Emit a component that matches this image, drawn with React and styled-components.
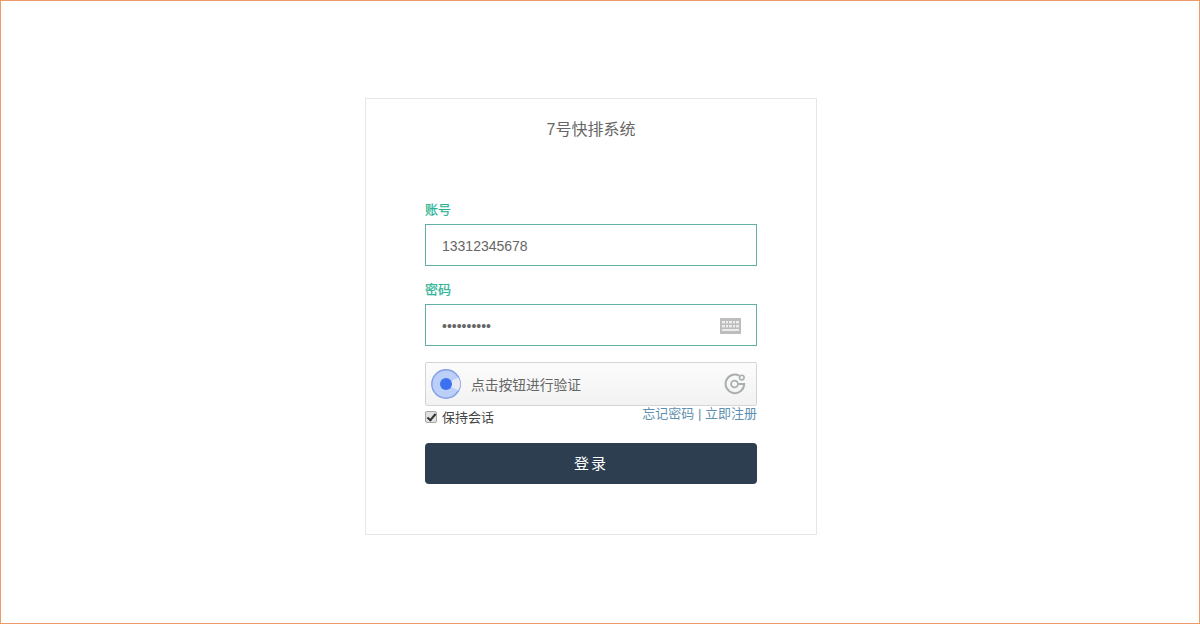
import React from "react";
import styled, { createGlobalStyle } from "styled-components";

const GlobalStyle = createGlobalStyle`
  html, body {
    margin: 0;
    padding: 0;
    background: #fff;
  }
  body, input, button {
    font-family: "Liberation Sans", "Noto Sans CJK SC", sans-serif;
  }
`;

const Frame = styled.div`
  box-sizing: border-box;
  width: 1200px;
  height: 624px;
  border: 1px solid #ee9a6b;
  padding-top: 97px;
  padding-left: 364px;
`;

const Card = styled.div`
  box-sizing: border-box;
  width: 452px;
  height: 437px;
  border: 1px solid #e7e7e7;
  padding: 21px 59px 0;
`;

const Title = styled.h1`
  margin: 0 0 60px;
  height: 20px;
  line-height: 20px;
  font-size: 16px;
  font-weight: 400;
  color: #666;
  text-align: center;
`;

const Label = styled.label`
  display: block;
  height: 18px;
  line-height: 20px;
  margin-bottom: 6px;
  font-size: 13px;
  color: #2bb394;
  -webkit-text-stroke: 0.25px #2bb394;
`;

const Field = styled.div`
  position: relative;
  margin-bottom: ${({ $gap }) => $gap}px;
`;

const Input = styled.input`
  display: block;
  box-sizing: border-box;
  width: 100%;
  height: 42px;
  padding: 2px 16px 0;
  border: 1px solid #62b0a8;
  border-radius: 0;
  outline: none;
  background: #fff;
  color: #666;
  font-size: 14px;
`;

const KeyboardIcon = styled.svg`
  position: absolute;
  right: 16px;
  top: 14px;
  width: 21px;
  height: 16px;
`;

const Captcha = styled.div`
  box-sizing: border-box;
  display: flex;
  align-items: center;
  width: 100%;
  height: 44px;
  padding: 0 10px 0 5px;
  border: 1px solid #d4d4d4;
  border-radius: 2px;
  background: linear-gradient(180deg, #fcfcfc 0%, #f2f2f2 100%);
`;

const CaptchaText = styled.span`
  flex: 1;
  margin-left: 10px;
  font-size: 13.75px;
  color: #666;
`;

const OptionsRow = styled.div`
  display: flex;
  justify-content: space-between;
  align-items: flex-start;
  height: 37px;
`;

const Remember = styled.label`
  display: flex;
  align-items: center;
  margin-top: 3px;
  font-size: 13px;
  line-height: 18px;
  color: #444;
`;

const Checkbox = styled.input`
  appearance: none;
  position: relative;
  box-sizing: border-box;
  width: 12px;
  height: 12px;
  margin: 0 5px 2px 0;
  border: 1px solid #a6a6a6;
  border-radius: 2px;
  background: #e2e2e2;

  &:checked::after {
    content: "";
    position: absolute;
    left: 3px;
    top: 0;
    width: 3px;
    height: 7px;
    border: solid #333;
    border-width: 0 2px 2px 0;
    transform: rotate(40deg);
  }
`;

const Links = styled.div`
  margin-top: -1px;
  font-size: 13px;
  line-height: 18px;
  color: #5f8fb0;
`;

const LinkItem = styled.a`
  color: #5f8fb0;
  text-decoration: none;
`;

const SubmitButton = styled.button`
  display: block;
  width: 100%;
  height: 41px;
  padding: 0 0 2px;
  border: 0;
  border-radius: 4px;
  background: #2c3e50;
  color: #fff;
  font-size: 15px;
  letter-spacing: 2px;
`;

function Keyboard() {
  return (
    <KeyboardIcon viewBox="0 0 21 16">
      <rect width="21" height="16" fill="#bdbdbd" />
      <g fill="#ececec">
        <rect x="2" y="3" width="3" height="2.4" />
        <rect x="6" y="3" width="2" height="2.4" />
        <rect x="9" y="3" width="3" height="2.4" />
        <rect x="13" y="3" width="2" height="2.4" />
        <rect x="16" y="3" width="3" height="2.4" />
        <rect x="2" y="7" width="3" height="2.4" />
        <rect x="6" y="7" width="2" height="2.4" />
        <rect x="9" y="7" width="3" height="2.4" />
        <rect x="13" y="7" width="2" height="2.4" />
        <rect x="16" y="7" width="3" height="2.4" />
        <rect x="2" y="11" width="17" height="2" />
      </g>
    </KeyboardIcon>
  );
}

function CaptchaMark() {
  return (
    <svg width="30" height="30" viewBox="0 0 30 30">
      <circle cx="15" cy="15" r="14.2" fill="#bccff8" stroke="#7f9fe6" strokeWidth="1.4" />
      <path d="M15 15 L27.4 8.5 A13.6 13.6 0 0 1 27.4 21.5 Z" fill="#e6e9f2" />
      <circle cx="15" cy="15" r="6" fill="#3b71f0" />
    </svg>
  );
}

function RefreshMark() {
  return (
    <svg width="22" height="22" viewBox="0 0 22 22" fill="none">
      <path d="M15.2 2.6 A9.3 9.3 0 1 0 20.2 11 H14.4" stroke="#a9afaf" strokeWidth="2" />
      <circle cx="10.5" cy="11" r="3.4" stroke="#a9afaf" strokeWidth="1.8" />
      <circle cx="17.8" cy="4.6" r="2.3" stroke="#a9afaf" strokeWidth="1.6" />
    </svg>
  );
}

export default function App() {
  return (
    <>
      <GlobalStyle />
      <Frame>
        <Card>
          <Title>7号快排系统</Title>
          <Label htmlFor="account">账号</Label>
          <Field $gap={14}>
            <Input id="account" defaultValue="13312345678" />
          </Field>
          <Label htmlFor="password">密码</Label>
          <Field $gap={16}>
            <Input id="password" type="password" defaultValue="1234567890" />
            <Keyboard />
          </Field>
          <Captcha>
            <CaptchaMark />
            <CaptchaText>点击按钮进行验证</CaptchaText>
            <RefreshMark />
          </Captcha>
          <OptionsRow>
            <Remember>
              <Checkbox type="checkbox" defaultChecked />
              保持会话
            </Remember>
            <Links>
              <LinkItem href="#">忘记密码</LinkItem> | <LinkItem href="#">立即注册</LinkItem>
            </Links>
          </OptionsRow>
          <SubmitButton>登录</SubmitButton>
        </Card>
      </Frame>
    </>
  );
}
